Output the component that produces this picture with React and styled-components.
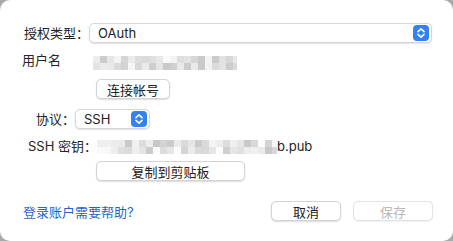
import React from 'react';
import styled, { createGlobalStyle } from 'styled-components';

const GlobalStyle = createGlobalStyle`
  html, body {
    margin: 0;
    padding: 0;
    background: #a9a9a9;
  }
  body {
    font-family: Inter, "Noto Sans CJK SC", "Noto Sans", sans-serif;
    -webkit-font-smoothing: antialiased;
  }
`

const Stepper = () => (
  <svg width="16" height="16" viewBox="0 0 16 16">
    <rect x="0" y="0" width="16" height="16" rx="4" fill="#3282f6" />
    <path d="M5 6.6 L8 3.8 L11 6.6" fill="none" stroke="#fff" strokeWidth="1.6" strokeLinecap="round" strokeLinejoin="round" />
    <path d="M5 9.4 L8 12.2 L11 9.4" fill="none" stroke="#fff" strokeWidth="1.6" strokeLinecap="round" strokeLinejoin="round" />
  </svg>
)

// pixelated censor block, like the screenshot's redacted name / key
const Mosaic = ({ width, height, cell = 6, seed = 7 }) => {
  let s = seed
  const rand = () => {
    s = (s * 9301 + 49297) % 233280
    return s / 233280
  }
  const cols = Math.ceil(width / cell)
  const rows = Math.ceil(height / cell)
  const cells = []
  for (let r = 0; r < rows; r++) {
    for (let c = 0; c < cols; c++) {
      const edge = r === 0 || r === rows - 1
      const gap = rand() < 0.22
      const v = Math.round(gap ? 238 + rand() * 15 : edge ? 200 + rand() * 40 : 145 + rand() * 90)
      cells.push(<rect key={r + '-' + c} x={c * cell} y={r * cell} width={cell} height={cell} fill={`rgb(${v},${v},${v})`} />)
    }
  }
  return <svg width={width} height={height} viewBox={`0 0 ${width} ${height}`}>{cells}</svg>
}

function App() {
  return <>
    <GlobalStyle />
    <Dialog>
      <Row $top={22} $height={21}>
        <Label $width={67} $align="right">授权类型：</Label>
        <Select $grow>
          <span>OAuth</span>
          <Stepper />
        </Select>
      </Row>
      <Row $top={8} $height={20} $start>
        <Label $width={71}>用户名</Label>
        <Redacted $offset={5}>
          <Mosaic width={144} height={14} cell={7} seed={11} />
        </Redacted>
      </Row>
      <Row $top={8} $height={20}>
        <Indent $width={74} />
        <Button $width={74}>连接帐号</Button>
      </Row>
      <Row $top={10} $height={20}>
        <Label $width={53} $align="right">协议：</Label>
        <Select $width={75}>
          <span>SSH</span>
          <Stepper />
        </Select>
      </Row>
      <Row $top={8} $height={18}>
        <Label $width={75} $align="right">SSH 密钥：</Label>
        <Value>
          <Redacted $offset={1}>
            <Mosaic width={180} height={14} cell={7} seed={29} />
          </Redacted>
          <span>b.pub</span>
        </Value>
      </Row>
      <Row $top={6} $height={20}>
        <Indent $width={74} />
        <Button $width={149}>复制到剪贴板</Button>
      </Row>
      <Footer>
        <HelpLink>登录账户需要帮助?</HelpLink>
        <Actions>
          <Button $width={70}>取消</Button>
          <Button $width={80} $disabled>保存</Button>
        </Actions>
      </Footer>
    </Dialog>
  </>
}

export default App;

const Dialog = styled.div`
  width: 453px;
  height: 241px;
  box-sizing: border-box;
  background: #fff;
  border-radius: 10px;
  padding: 0 21px 0 22px;
  display: flex;
  flex-direction: column;
  color: #252525;
  font-size: 13px;
  overflow: hidden;
`

const Row = styled.div`
  display: flex;
  align-items: ${p => p.$start ? 'flex-start' : 'center'};
  margin-top: ${p => p.$top}px;
  height: ${p => p.$height}px;
`

const Label = styled.div`
  flex: 0 0 ${p => p.$width}px;
  text-align: ${p => p.$align || 'left'};
  line-height: 18px;
  white-space: nowrap;
`

const Indent = styled.div`
  flex: 0 0 ${p => p.$width}px;
`

const Select = styled.div`
  ${p => p.$grow ? 'flex: 1;' : `flex: 0 0 ${p.$width}px;`}
  height: 20px;
  box-sizing: border-box;
  display: flex;
  align-items: center;
  justify-content: space-between;
  padding: 0 2px 0 8px;
  background: #fff;
  border: 0.5px solid #d6d6d6;
  border-radius: 5px;
  box-shadow: 0 1px 1.5px rgba(0, 0, 0, 0.12);
  color: #222;
  > svg { flex: none; }
`

const Redacted = styled.span`
  display: inline-flex;
  margin-top: ${p => p.$offset}px;
  filter: blur(0.7px);
`

const Value = styled.div`
  display: flex;
  align-items: center;
  color: #222;
`

const Button = styled.button`
  width: ${p => p.$width}px;
  height: 20px;
  box-sizing: border-box;
  padding: 0;
  font: inherit;
  font-size: 13px;
  color: ${p => p.$disabled ? '#b8b8b8' : '#222'};
  background: #fff;
  border: 0.5px solid ${p => p.$disabled ? '#e2e2e2' : '#d3d3d3'};
  border-radius: 5px;
  box-shadow: ${p => p.$disabled ? '0 0.5px 1px rgba(0,0,0,0.06)' : '0 1px 1.5px rgba(0, 0, 0, 0.14)'};
  cursor: ${p => p.$disabled ? 'default' : 'pointer'};
`

const Footer = styled.div`
  margin-top: 20px;
  height: 20px;
  display: flex;
  align-items: center;
  justify-content: space-between;
  padding-left: 1px;
`

const HelpLink = styled.a`
  color: #1f64c8;
  cursor: pointer;
`

const Actions = styled.div`
  display: flex;
  gap: 12px;
  margin-right: -1px;
`
